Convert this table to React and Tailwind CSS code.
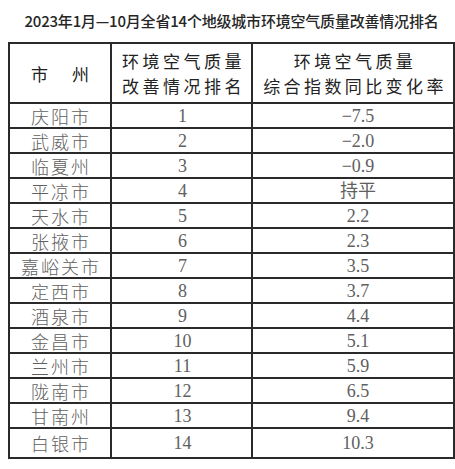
import React from 'react';

const rows = [
  ['庆阳市', '1', '−7.5'],
  ['武威市', '2', '−2.0'],
  ['临夏州', '3', '−0.9'],
  ['平凉市', '4', '持平'],
  ['天水市', '5', '2.2'],
  ['张掖市', '6', '2.3'],
  ['嘉峪关市', '7', '3.5'],
  ['定西市', '8', '3.7'],
  ['酒泉市', '9', '4.4'],
  ['金昌市', '10', '5.1'],
  ['兰州市', '11', '5.9'],
  ['陇南市', '12', '6.5'],
  ['甘南州', '13', '9.4'],
  ['白银市', '14', '10.3'],
];

const sans = { fontFamily: '"Noto Sans CJK SC", "Noto Sans", sans-serif' };
const serif = { fontFamily: '"Liberation Serif", "Noto Sans CJK SC", serif' };

const App = () => {
  return (
    <div className="w-[455px] h-[469px] bg-white overflow-hidden">
      {/* Title */}
      <div
        className="h-[42px] flex items-center justify-center pl-[8px] text-[15px] font-medium text-[#262626] tracking-[-0.2px]"
        style={sans}
      >
        2023年1月—10月全省14个地级城市环境空气质量改善情况排名
      </div>

      {/* Table */}
      <table className="ml-[8px] w-[445px] border-collapse table-fixed">
        <colgroup>
          <col className="w-[102px]" />
          <col className="w-[141px]" />
          <col className="w-[202px]" />
        </colgroup>
        <thead>
          <tr className="h-[60px] text-[#222] text-[17px] leading-[25px]" style={sans}>
            <th className="border-2 border-[#2a2a2a] font-normal">
              <span className="inline-block w-[41px] text-left">市</span>
              <span>州</span>
            </th>
            <th className="border-2 border-[#2a2a2a] font-normal tracking-[3.5px] pl-[4px]">
              环境空气质量
              <br />
              改善情况排名
            </th>
            <th className="border-2 border-[#2a2a2a] font-normal tracking-[3.4px] pl-[4px]">
              环境空气质量
              <br />
              综合指数同比变化率
            </th>
          </tr>
        </thead>
        <tbody>
          {rows.map(([city, rank, rate], i) => (
            <tr
              key={city}
              className={`${i === rows.length - 1 ? 'h-[30px]' : 'h-[25px]'} text-[#606060] text-[18px] leading-none`}
            >
              <td
                className="border-2 border-[#2a2a2a] text-center font-light tracking-[2px] pl-[2px]"
                style={sans}
              >
                {city}
              </td>
              <td className="border-2 border-[#2a2a2a] text-center pl-[2px]" style={serif}>
                {rank}
              </td>
              <td className="border-2 border-[#2a2a2a] text-center pl-[10px]" style={serif}>
                {rate}
              </td>
            </tr>
          ))}
        </tbody>
      </table>
    </div>
  );
};

export default App;
